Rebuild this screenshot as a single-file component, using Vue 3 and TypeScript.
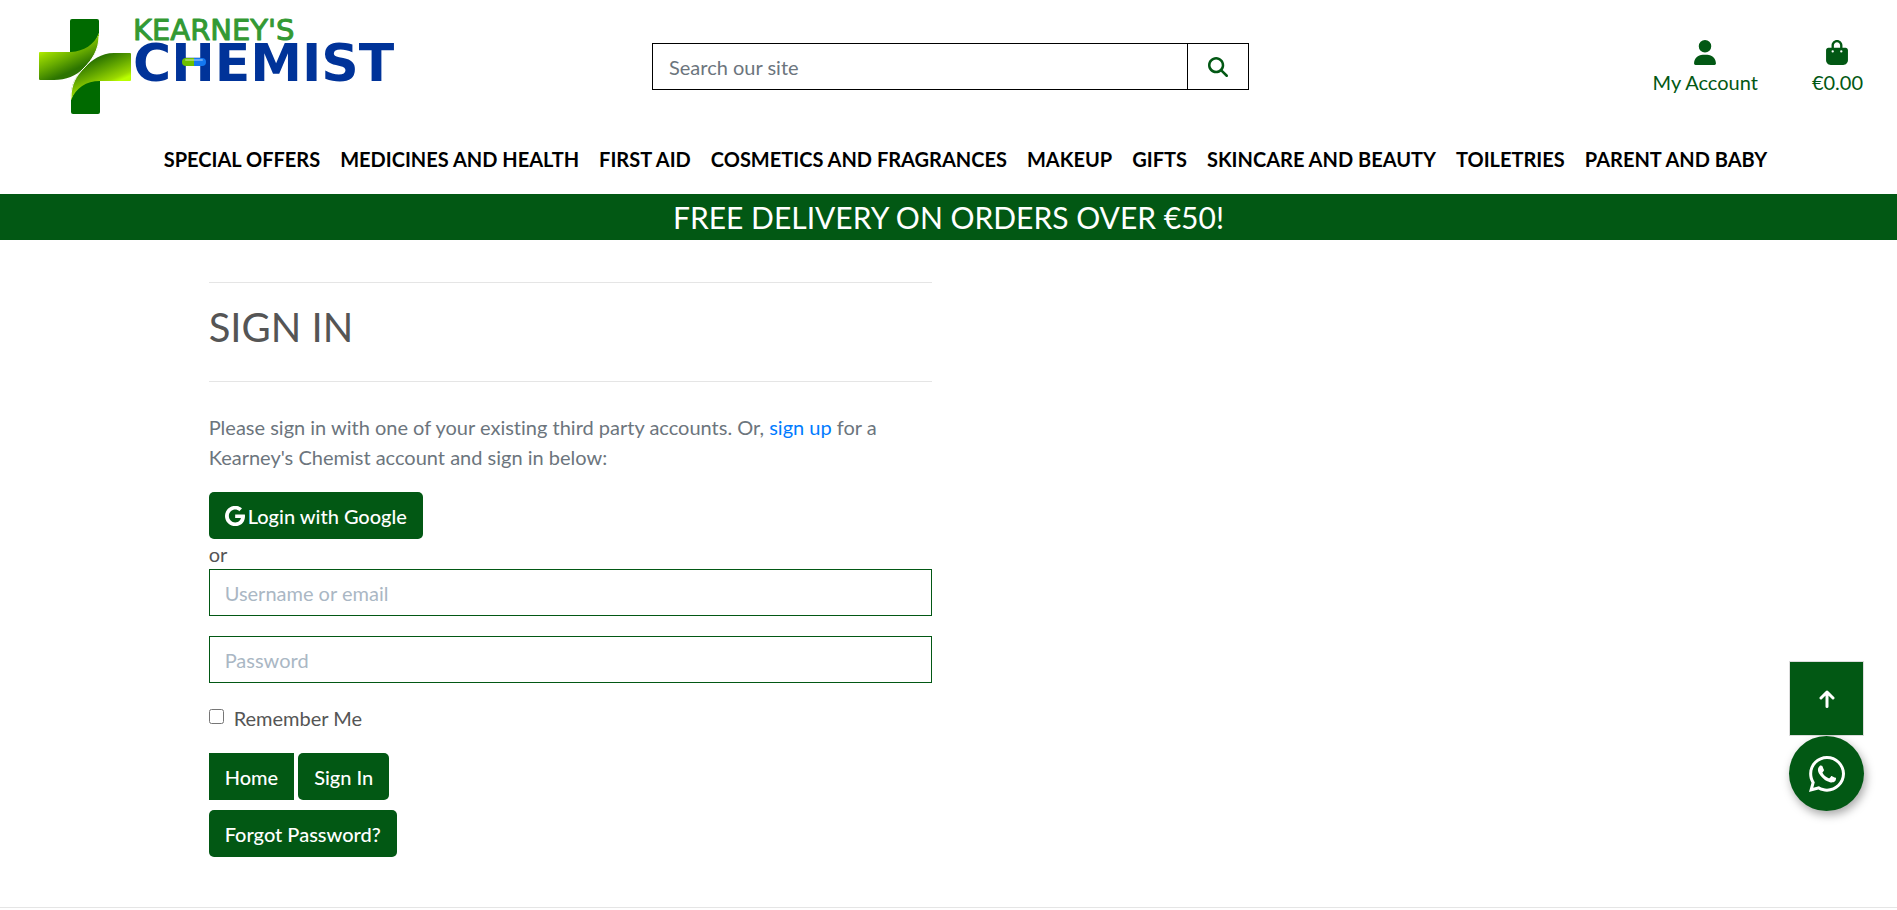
<script setup lang="ts">
import { ref } from 'vue'

const categories: string[] = [
  'Special Offers',
  'Medicines and Health',
  'First Aid',
  'Cosmetics and Fragrances',
  'Makeup',
  'Gifts',
  'Skincare and Beauty',
  'Toiletries',
  'Parent and Baby',
]

const query = ref('')
const username = ref('')
const password = ref('')
const remember = ref(false)

function toTop(): void {
  window.scrollTo({ top: 0, behavior: 'smooth' })
}
</script>

<template>
  <div class="page">
    <header class="header">
      <a class="logo" href="#" aria-label="Kearney's Chemist home">
        <svg width="364" height="117" viewBox="0 -6 364 117" aria-hidden="true">
          <defs>
            <linearGradient id="leafLeft" gradientUnits="userSpaceOnUse" x1="14" y1="32" x2="27" y2="60">
              <stop offset="0" stop-color="#b4ee00" />
              <stop offset="0.15" stop-color="#9ad800" />
              <stop offset="0.55" stop-color="#68ac00" />
              <stop offset="1" stop-color="#2c7400" />
            </linearGradient>
            <linearGradient id="leafRight" gradientUnits="userSpaceOnUse" x1="26" y1="59" x2="38" y2="86">
              <stop offset="0" stop-color="#2c7400" />
              <stop offset="0.45" stop-color="#64a800" />
              <stop offset="0.85" stop-color="#9ad800" />
              <stop offset="1" stop-color="#baff00" />
            </linearGradient>
          </defs>
          <rect x="32" y="5" width="29" height="45" rx="2" fill="#006a00" />
          <rect x="33" y="55" width="29" height="45" rx="2" fill="#006a00" />
          <path d="M61 19V52H46V54Z" fill="#fff" />
          <path d="M33 86V60L46 54Z" fill="#fff" />
          <path d="M2 38H33C46 37 56 31 61 19C62 34 55 45 46 54C38 62 28 66 16 66H2Q1 66 1 65V39Q1 38 2 38Z" fill="url(#leafLeft)" />
          <path d="M92 39H76C63 39 54 46 46 54C36 63 32 73 33 86C38 74 48 67 62 67H92Q93 67 93 66V40Q93 39 92 39Z" fill="url(#leafRight)" />
          <path d="M61 22C61 36 54 46 46 54C38 62 33 70 33 84" fill="none" stroke="#fff" stroke-width="1" />
          <text class="logo-top" x="95" y="26">KEARNEY'S</text>
          <text class="logo-main" x="95" y="67">CHEMIST</text>
          <path d="M156 44H148A4 4 0 0 0 148 52H156Z" fill="#6cc000" />
          <path d="M156 44H164A4 4 0 0 1 164 52H156Z" fill="#1478f0" />
          <path d="M148 46H164" fill="none" stroke="#fff" stroke-opacity="0.35" stroke-width="2" stroke-linecap="round" />
        </svg>
      </a>
      <form class="search" role="search" @submit.prevent>
        <input v-model="query" type="text" placeholder="Search our site" aria-label="Search our site" />
        <button type="submit" aria-label="Search">
          <svg width="20" height="20" viewBox="0 0 512 512" fill="currentColor" aria-hidden="true">
            <path d="M416 208c0 45.900-14.900 88.300-40 122.700L502.600 457.400c12.500 12.500 12.500 32.800 0 45.300s-32.800 12.500-45.300 0L330.700 376c-34.400 25.200-76.800 40-122.700 40C93.100 416 0 322.900 0 208S93.100 0 208 0S416 93.100 416 208zM208 352a144 144 0 1 0 0-288 144 144 0 1 0 0 288z" />
          </svg>
        </button>
      </form>
      <div class="account">
        <a href="#">
          <svg width="22" height="25" viewBox="0 0 448 512" fill="currentColor" aria-hidden="true">
            <path d="M224 256A128 128 0 1 0 224 0a128 128 0 1 0 0 256zm-45.700 48C79.800 304 0 383.800 0 482.300C0 498.700 13.300 512 29.700 512H418.300c16.400 0 29.700-13.300 29.700-29.700C448 383.800 368.200 304 269.700 304H178.300z" />
          </svg>
          <span>My Account</span>
        </a>
        <a href="#">
          <svg width="22" height="25" viewBox="0 0 448 512" fill="currentColor" aria-hidden="true">
            <path d="M160 112c0-35.300 28.700-64 64-64s64 28.700 64 64v48H160V112zm-48 48H48c-26.500 0-48 21.500-48 48V416c0 53 43 96 96 96H352c53 0 96-43 96-96V208c0-26.500-21.500-48-48-48H336V112C336 50.100 285.900 0 224 0S112 50.100 112 112v48zm24 48a24 24 0 1 1 0 48 24 24 0 1 1 0-48zm152 24a24 24 0 1 1 48 0 24 24 0 1 1-48 0z" />
          </svg>
          <span>€0.00</span>
        </a>
      </div>
    </header>

    <nav class="nav" aria-label="Categories">
      <a v-for="name in categories" :key="name" href="#">{{ name }}</a>
    </nav>

    <div class="banner">FREE DELIVERY ON ORDERS OVER €50!</div>

    <main class="content">
      <section class="panel">
        <hr />
        <h1>SIGN IN</h1>
        <hr />
        <p class="intro">
          Please sign in with one of your existing third party accounts. Or, <a href="#">sign up</a> for a
          Kearney's Chemist account and sign in below:
        </p>
        <button type="button" class="btn google">
          <svg width="20" height="20" viewBox="0 0 488 488" fill="currentColor" aria-hidden="true">
            <path d="M488 249.800C488 391.800 390.800 492 248 492 111.100 492 0 380.900 0 244S111.100-4 248-4c66.800 0 123 24.500 166.300 64.900l-67.500 64.900C258.500 40.600 94.300 104.600 94.300 244c0 86.500 69.100 156.600 153.700 156.600 98.200 0 135-70.400 140.800-106.900H248v-85.300h236.100c2.300 12.700 3.900 24.900 3.900 41.400z" />
          </svg>
          <span>Login with Google</span>
        </button>
        <div class="or">or</div>
        <form @submit.prevent>
          <input v-model="username" class="field" type="text" placeholder="Username or email" aria-label="Username or email" />
          <input v-model="password" class="field" type="password" placeholder="Password" aria-label="Password" />
          <div class="remember">
            <input id="remember" v-model="remember" type="checkbox" />
            <label for="remember">Remember Me</label>
          </div>
          <div class="actions">
            <a class="btn square" href="#">Home</a>
            <button type="submit" class="btn">Sign In</button>
          </div>
          <a class="btn" href="#">Forgot Password?</a>
        </form>
      </section>
    </main>

    <hr class="foot-rule" />

    <div class="floating">
      <button type="button" class="to-top" aria-label="Back to top" @click="toTop">
        <svg width="16" height="18" viewBox="0 0 16 18" fill="none" stroke="currentColor" stroke-width="3" stroke-linecap="round" stroke-linejoin="round" aria-hidden="true">
          <path d="M8 16.500V2M2 8L8 2L14 8" />
        </svg>
      </button>
      <a class="whatsapp" href="#" aria-label="Chat on WhatsApp">
        <svg width="36" height="36" viewBox="0 0 448 448" fill="currentColor" aria-hidden="true">
          <path d="M380.900 65.100C339 23.100 283.200 0 223.900 0c-122.400 0-222 99.600-222 222 0 39.100 10.200 77.300 29.600 111L0 448l117.700-30.900c32.400 17.700 68.900 27 106.100 27h.1c122.300 0 224.100-99.600 224.100-222 0-59.300-25.200-115-67.100-157zm-157 341.600c-33.200 0-65.700-8.900-94-25.700l-6.700-4-69.800 18.300L72 327.200l-4.400-7c-18.500-29.400-28.200-63.300-28.200-98.200 0-101.700 82.800-184.500 184.600-184.500 49.300 0 95.600 19.200 130.400 54.100 34.800 34.900 56.200 81.200 56.100 130.500 0 101.800-84.900 184.600-186.600 184.600zm101.200-138.200c-5.500-2.800-32.800-16.200-37.900-18-5.100-1.900-8.800-2.800-12.500 2.800-3.700 5.600-14.300 18-17.600 21.800-3.200 3.700-6.500 4.200-12 1.400-32.600-16.300-54-29.100-75.500-66-5.700-9.800 5.700-9.100 16.300-30.300 1.800-3.700.9-6.900-.5-9.700-1.400-2.800-12.500-30.100-17.100-41.200-4.500-10.800-9.100-9.300-12.500-9.500-3.200-.2-6.900-.2-10.600-.2-3.700 0-9.700 1.400-14.800 6.900-5.100 5.600-19.400 19-19.400 46.300 0 27.300 19.900 53.700 22.600 57.400 2.800 3.700 39.100 59.700 94.800 83.800 35.200 15.200 49 16.500 66.600 13.900 10.700-1.600 32.800-13.400 37.400-26.400 4.600-13 4.600-24.100 3.200-26.400-1.300-2.500-5-3.900-10.500-6.600z" />
        </svg>
      </a>
    </div>
  </div>
</template>

<style>
body {
  margin: 0;
  background: #fff;
}
</style>

<style scoped>
.page {
  --green: #025814;
  font-family: Lato, "Noto Sans", sans-serif;
  font-size: 20px;
  line-height: 30px;
  font-variant-ligatures: none;
  color: #555;
}

.page *,
.page *::before {
  box-sizing: border-box;
}

input,
button {
  font: inherit;
}

.header {
  display: grid;
  grid-template-columns: 1fr 597px 1fr;
  align-items: center;
  height: 133px;
  padding: 0 34px 0 38px;
}

.logo {
  justify-self: start;
}

.logo svg {
  display: block;
}

.logo-top {
  font: 29px "DejaVu Sans", sans-serif;
  fill: #339933;
  stroke: #339933;
  stroke-width: 1px;
  stroke-linejoin: round;
}

.logo-main {
  font: bold 52px "DejaVu Sans", sans-serif;
  fill: #003399;
}

.search {
  display: flex;
  height: 47px;
  border: 1px solid #000;
}

.search input {
  flex: 1;
  min-width: 0;
  padding: 0 16px;
  border: 0;
  background: #fff;
  color: #495057;
}

.search input::placeholder {
  color: #6c757d;
  opacity: 1;
}

.search button {
  display: flex;
  align-items: center;
  justify-content: center;
  width: 61px;
  padding: 0;
  border: 0;
  border-left: 1px solid #000;
  background: #fff;
  color: var(--green);
}

.account {
  display: flex;
  justify-content: flex-end;
  gap: 54px;
  padding-top: 4px;
}

.account a {
  display: flex;
  flex-direction: column;
  align-items: center;
  gap: 2px;
  color: var(--green);
  text-decoration: none;
}

.nav {
  display: flex;
  justify-content: center;
  gap: 20px;
  height: 61px;
  padding: 11px 0 0 34px;
}

.nav a {
  color: #000;
  font-weight: 700;
  text-decoration: none;
  text-transform: uppercase;
  white-space: nowrap;
}

.banner {
  padding: 5px 0;
  background: var(--green);
  color: #fff;
  font-size: 30px;
  line-height: 36px;
  text-align: center;
}

.content {
  padding: 42px 11% 0;
}

.panel {
  width: calc(50% - 17px);
}

hr {
  margin: 0;
  border: 0;
  border-top: 1px solid #e5e5e5;
}

h1 {
  margin: 20px 0 30px;
  font-size: 40px;
  line-height: 48px;
  font-weight: 400;
}

.intro {
  margin: 30px 0 20px;
  color: #6c757d;
}

.intro a {
  color: #007bff;
  text-decoration: none;
}

.btn {
  display: inline-flex;
  align-items: center;
  height: 47px;
  padding: 0 16px;
  border: 0;
  border-radius: 5px;
  background: var(--green);
  color: #fff;
  font-weight: 500;
  text-decoration: none;
}

.google {
  display: flex;
  gap: 3px;
}

.square {
  border-radius: 0;
}

.field {
  display: block;
  width: 100%;
  height: 47px;
  margin-bottom: 20px;
  padding: 0 15px;
  border: 1px solid var(--green);
  background: #fff;
  color: #495057;
}

.field::placeholder {
  color: #aab7c4;
  opacity: 1;
}

.remember {
  display: flex;
  gap: 10px;
  margin-bottom: 20px;
}

.remember input {
  width: 15px;
  height: 15px;
  margin: 6px 0 0;
}

.actions {
  display: flex;
  gap: 4px;
  margin-bottom: 10px;
}

.foot-rule {
  margin-top: 50px;
}

.floating {
  position: fixed;
  right: 33px;
  bottom: 99px;
  display: flex;
  flex-direction: column;
  align-items: center;
}

.to-top,
.whatsapp {
  display: flex;
  align-items: center;
  justify-content: center;
  width: 75px;
  height: 75px;
  padding: 0;
  background: var(--green);
  color: #fff;
}

.to-top {
  border: 1px solid #dcdcdc;
}

.whatsapp {
  border-radius: 50%;
  box-shadow: 2px 4px 10px rgba(0, 0, 0, 0.35);
}
</style>
